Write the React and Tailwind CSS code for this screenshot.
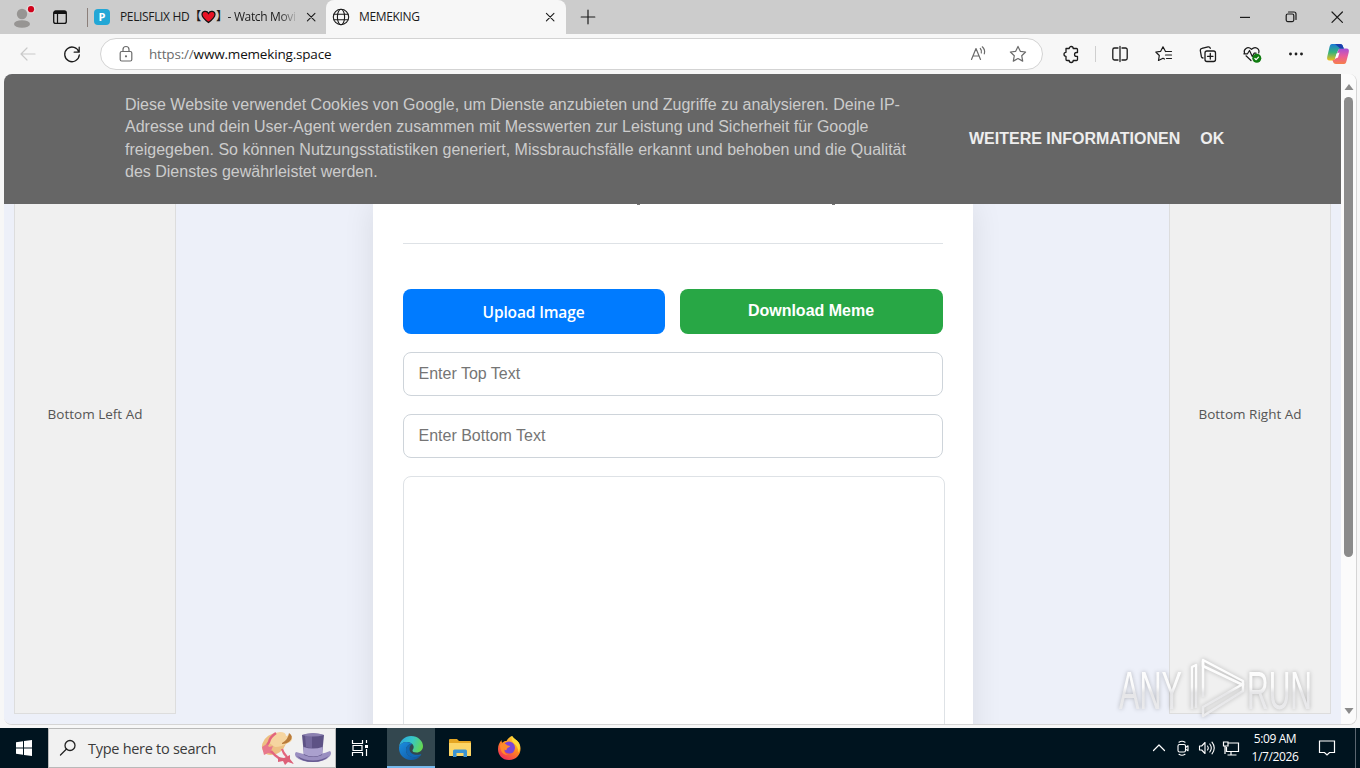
import React from 'react';

const Line = ({ className = '', size = 20, children, width = 1.2 }) => (
  <svg
    className={`shrink-0 ${className}`}
    width={size}
    height={size}
    viewBox="0 0 20 20"
    fill="none"
    stroke="currentColor"
    strokeWidth={width}
    strokeLinecap="round"
    strokeLinejoin="round"
  >
    {children}
  </svg>
);

const CloseIcon = ({ size = 20 }) => (
  <Line size={size}>
    <path d="M6 6l8.4 8.4M14.4 6L6 14.4" />
  </Line>
);

const TabStrip = () => (
  <div className="flex h-[34px] shrink-0 bg-[#cccccc] text-[#1b1b1b]">
    <svg className="ml-3 mt-1 shrink-0" width="24" height="26" viewBox="0 0 24 26">
      <circle cx="10" cy="10" r="5.2" fill="#979593" />
      <ellipse cx="10" cy="20" rx="8" ry="3.8" fill="#979593" />
      <circle cx="19" cy="5.2" r="4.4" fill="#e4dcdc" />
      <circle cx="19" cy="5.2" r="3.1" fill="#d0021b" />
    </svg>
    <svg className="ml-4 mt-[9px] shrink-0" width="16" height="16" viewBox="0 0 16 16" fill="none" stroke="#111">
      <rect x="1.7" y="2" width="12.6" height="12.4" rx="2" strokeWidth="1.3" />
      <path d="M2 3.5h12" strokeWidth="3" />
      <path d="M5.5 4v10" strokeWidth="1.2" />
    </svg>
    <div className="ml-[19px] mt-2 h-[19px] w-px shrink-0 bg-[#8b7f7a]"></div>
    <div className="flex w-[238px] shrink-0 items-center">
      <div className="ml-1.5 flex h-4 w-4 shrink-0 items-center justify-center rounded bg-[#22a7d6] font-['Open_Sans',sans-serif] text-[11px] font-bold text-white">
        P
      </div>
      <div className="ml-2.5 flex h-5 w-[178px] items-center whitespace-nowrap font-['Open_Sans','Noto_Sans_CJK_JP',sans-serif] text-[12px] tracking-[-0.35px]">
        <span>PELISFLIX HD</span>
        <span>【</span>
        <svg className="shrink-0" width="15" height="14" viewBox="0 0 15 14">
          <path
            d="M7.500 12.600C3.800 9.800 1 7.600 1 4.600C1 1 5.800 0 7.500 3.400C9.200 0 14 1 14 4.600C14 7.600 11.200 9.800 7.500 12.600Z"
            fill="#e81224"
            stroke="#111"
            strokeWidth="1.2"
          />
        </svg>
        <span>】</span>
        <span className="bg-gradient-to-r from-[#1b1b1b] from-75% to-[#bbbbbb] bg-clip-text text-transparent">
          - Watch Movi
        </span>
      </div>
      <div className="ml-1">
        <CloseIcon size={18} />
      </div>
    </div>
    <div className="flex w-[240px] shrink-0 items-center rounded-t-lg bg-[#f7f7f7]">
      <Line className="ml-[5px]" size={20} width={1.1}>
        <circle cx="10" cy="10" r="7.7" />
        <ellipse cx="10" cy="10" rx="3.6" ry="7.7" />
        <path d="M3 7.2h14M3 12.8h14" />
      </Line>
      <span className="ml-[8px] font-['Open_Sans',sans-serif] text-[12px] tracking-[-0.35px]">MEMEKING</span>
      <div className="ml-auto mr-[7px]">
        <CloseIcon size={18} />
      </div>
    </div>
    <Line className="ml-[12px] mt-[7px]" size={20}>
      <path d="M10 3.2v13.6M3.2 10h13.6" />
    </Line>
    <div className="ml-auto flex w-[138px] items-center">
      <Line className="ml-[13px]" size={20}>
        <path d="M5 10.4h10" strokeLinecap="butt" />
      </Line>
      <Line className="ml-[26px]" size={20}>
        <rect x="5.2" y="7" width="7.6" height="7.6" rx="1.5" />
        <path d="M7.5 5h5.5a2 2 0 0 1 2 2v5.4" />
      </Line>
      <Line className="ml-[26px]" size={20}>
        <path d="M5 5l10.4 10.4M15.4 5L5 15.4" />
      </Line>
    </div>
  </div>
);

const CopilotIcon = () => (
  <svg className="shrink-0" width="24" height="24" viewBox="0 0 24 24">
    <defs>
      <linearGradient id="cpA" x1="0" y1="0" x2="0" y2="1">
        <stop offset="0" stopColor="#1b7bd8" />
        <stop offset=".5" stopColor="#35b37c" />
        <stop offset="1" stopColor="#f2c019" />
      </linearGradient>
      <linearGradient id="cpB" x1="0" y1="0" x2="0" y2="1">
        <stop offset="0" stopColor="#a44fd8" />
        <stop offset=".5" stopColor="#ea5b9a" />
        <stop offset="1" stopColor="#f77f4a" />
      </linearGradient>
    </defs>
    <path d="M6 2h8c2 0 2.600 1 3.200 3l.8 2h-3c-2.500 0-3 1-3.700 3.500L9.500 16c-.6 2-1.500 2.500-3.500 2.500H3.500C1.500 18.500.6 17 1.300 14.500L3.500 5C4 3 4.500 2 6 2z" fill="url(#cpA)" />
    <path d="M18 22h-8c-2 0-2.600-1-3.200-3L6.500 18c2.500 0 3-1 3.700-3.500L12 9c.6-2 1.500-2.500 3.500-2.500h5c2 0 2.900 1.500 2.200 4L20.500 19c-.5 2-1 3-2.500 3z" fill="url(#cpB)" />
    <path d="M9 2h5c2 0 2.600 1 3.200 3l.6 1.600h-3.600z" fill="#1b3fae" />
    <path d="M10.500 11.500l3-1-1.500 5-3 1.200z" fill="#fff" />
  </svg>
);

const Toolbar = () => (
  <div className="flex h-10 shrink-0 items-center bg-[#f7f7f7] text-[#1b1b1b]">
    <Line className="ml-[18px] text-[#c9c9c9]" size={20}>
      <path d="M17 10H3M9 4l-6 6 6 6" />
    </Line>
    <Line className="ml-6" size={20} width={1.3}>
      <path d="M17 8.200A7.300 7.300 0 1 0 17.300 11M17.200 3.200v5h-5" />
    </Line>
    <div className="ml-[18px] flex h-8 w-[943px] items-center rounded-full border border-[#d3d3d3] bg-white text-[#6b6b6b]">
      <Line className="ml-[15px]" size={20}>
        <rect x="4.200" y="7.500" width="11.600" height="9.500" rx="1.500" />
        <path d="M7 7.500V5.500a3 3 0 0 1 6 0v2" />
        <circle cx="10" cy="12.300" r=".5" fill="currentColor" />
      </Line>
      <span className="ml-[13px] font-['Open_Sans',sans-serif] text-[13.5px] tracking-[-0.18px]">
        https://<span className="text-[#111]">www.memeking.space</span>
      </span>
      <Line className="ml-auto" size={20}>
        <path d="M3.500 15.500L8 4.500 12.500 15.500M5 12h6" />
        <path d="M12.300 4.500q1.700 1.800 1 4.500M14.300 2.800q3.200 3 2 7" />
      </Line>
      <Line className="ml-5 mr-[14px]" size={20}>
        <path d="M10 2.400l2.300 4.900 5.300.7-3.900 3.700 1 5.400-4.700-2.600-4.700 2.600 1-5.400L2.400 8l5.300-.7z" />
      </Line>
    </div>
    <Line className="ml-[18px]" size={20} width={1.3}>
      <path d="M5 4.500h3.200a2 2 0 0 1 4 0h3.300a1 1 0 0 1 1 1v3h-1a1.900 1.900 0 0 0 0 3.900h1v3.100a1 1 0 0 1-1 1h-3.300a2 2 0 0 1-4 0H6a1 1 0 0 1-1-1v-3.200a2 2 0 0 1 0-4z" />
    </Line>
    <div className="ml-[14px] h-4 w-px bg-[#cfcfcf]"></div>
    <Line className="ml-[14px]" size={20} width={1.3}>
      <path d="M8 4H4.500A1.700 1.700 0 0 0 2.800 5.700v8.600A1.700 1.700 0 0 0 4.500 16H8M12 4h3.500a1.700 1.700 0 0 1 1.700 1.700v8.600a1.700 1.700 0 0 1-1.700 1.700H12M10 2.500v15" />
    </Line>
    <Line className="ml-6" size={20} width={1.2}>
      <path d="M11.500 7.500L9 2.800 6.700 7.300l-4.900.7 3.500 3.500-.8 5 4.500-2.300 1.500.8M11.500 7.500h6M11.500 11h6M12.500 14.500H17.500" />
    </Line>
    <Line className="ml-6" size={20} width={1.3}>
      <rect x="7" y="7" width="10.500" height="10.500" rx="2" />
      <path d="M12.300 9.500v5.500M9.500 12.300h5.500M5 14a2 2 0 0 1-1.600-1.300L2.300 6.500a2 2 0 0 1 1.600-2.200L10 2.900a2 2 0 0 1 2.300 1.400" />
    </Line>
    <Line className="ml-6" size={20} width={1.2}>
      <path d="M2.500 9C1.200 5.500 5.500 1.500 9.500 5.300 13.500 1.500 18 5 16.700 9M4 11.800L9 16.500M1.800 9.800h3.700l2-3.300 2.800 6 1.800-3.300h2" />
      <circle cx="14.800" cy="14.300" r="4.500" fill="#107c10" stroke="none" />
      <path d="M12.900 14.500l1.300 1.200 2.300-2.500" stroke="#fff" />
    </Line>
    <Line className="ml-6" size={20}>
      <circle cx="4.500" cy="10" r=".8" fill="currentColor" />
      <circle cx="10" cy="10" r=".8" fill="currentColor" />
      <circle cx="15.500" cy="10" r=".8" fill="currentColor" />
    </Line>
    <div className="ml-5">
      <CopilotIcon />
    </div>
  </div>
);

const CookieBanner = () => (
  <div className="relative z-10 flex h-[130px] shrink-0 items-center bg-[#666666] font-['Liberation_Sans',sans-serif] text-base">
    <p className="-mt-px ml-[121px] w-[800px] whitespace-nowrap leading-[22.4px] text-[#cccccc]">
      Diese Website verwendet Cookies von Google, um Dienste anzubieten und Zugriffe zu analysieren. Deine IP-
      <br />
      Adresse und dein User-Agent werden zusammen mit Messwerten zur Leistung und Sicherheit für Google
      <br />
      freigegeben. So können Nutzungsstatistiken generiert, Missbrauchsfälle erkannt und behoben und die Qualität
      <br />
      des Dienstes gewährleistet werden.
    </p>
    <div className="ml-11 flex gap-5 whitespace-nowrap font-bold text-[#eeeeee]">
      <button>WEITERE INFORMATIONEN</button>
      <button>OK</button>
    </div>
  </div>
);

const SideAd = ({ label }) => (
  <aside className="flex h-[510px] w-[162px] shrink-0 justify-center border border-t-0 border-[#dddddd] bg-[#f0f0f0] pt-[200px] font-['Open_Sans',sans-serif] text-[13.5px] leading-5 text-[#555555]">
    {label}
  </aside>
);

const MemeCard = () => (
  <main className="h-[560px] w-[600px] shrink-0 bg-white px-[30px] shadow-[0_0_30px_rgba(0,0,0,0.09)]">
    <div className="flex h-px">
      <div className="ml-[234px] h-px w-[3px] bg-[#777]"></div>
      <div className="ml-[192px] h-px w-[3px] bg-[#777]"></div>
    </div>
    <hr className="mt-[38px] border-[#dee2e6]" />
    <div className="mt-[45px] flex h-[45px] gap-[15px]">
      <button className="w-[262px] rounded-lg bg-[#007bff] pt-0.5 font-['Open_Sans',sans-serif] text-[15.5px] font-semibold tracking-[-0.15px] text-white">
        Upload Image
      </button>
      <button className="flex-1 rounded-lg bg-[#28a745] pb-0.5 font-['Liberation_Sans',sans-serif] text-base font-bold text-white">
        Download Meme
      </button>
    </div>
    <input
      className="mt-[18px] block h-11 w-full rounded-lg border border-[#ced4da] px-[15px] font-['Liberation_Sans',sans-serif] text-base placeholder:text-[#757575]"
      placeholder="Enter Top Text"
    />
    <input
      className="mt-[18px] block h-11 w-full rounded-lg border border-[#ced4da] px-[15px] font-['Liberation_Sans',sans-serif] text-base placeholder:text-[#757575]"
      placeholder="Enter Bottom Text"
    />
    <div className="mt-[18px] h-[400px] w-[542px] rounded-lg border border-[#dee2e6]"></div>
  </main>
);

const Scrollbar = () => (
  <div className="flex w-[15px] shrink-0 flex-col items-center bg-[#fbfbfb]">
    <svg className="mt-[9px] shrink-0" width="10" height="8" viewBox="0 0 10 8">
      <path d="M5 1l4.500 6h-9z" fill="#8b8b8b" />
    </svg>
    <div className="mt-[6px] h-[460px] w-[9px] shrink-0 rounded-full bg-[#8b8b8b]"></div>
    <svg className="mb-[9px] mt-auto shrink-0" width="10" height="8" viewBox="0 0 10 8">
      <path d="M5 7l4.500-6h-9z" fill="#8b8b8b" />
    </svg>
  </div>
);

const Watermark = () => (
  <svg
    className="absolute left-[1112px] top-[648px] drop-shadow-[0_0_2px_rgba(0,0,0,0.25)]"
    width="240"
    height="76"
    viewBox="0 0 240 76"
    fill="none"
    stroke="url(#wm)"
    strokeLinejoin="round"
  >
    <defs>
      <linearGradient id="wm" gradientUnits="userSpaceOnUse" x1="0" y1="10" x2="0" y2="68">
        <stop offset="0" stopColor="#ffffff" />
        <stop offset=".5" stopColor="#fafafa" />
        <stop offset=".6" stopColor="#e6e6e8" />
        <stop offset="1" stopColor="#ececee" />
      </linearGradient>
    </defs>
    <g fill="url(#wm)" stroke="none" fontFamily="Liberation Sans, sans-serif" fontSize="53">
      <text x="7" y="61" textLength="63" lengthAdjust="spacingAndGlyphs">ANY</text>
      <text x="135" y="61" textLength="65" lengthAdjust="spacingAndGlyphs">RUN</text>
    </g>
    <path d="M80 61V19l4-2v43M91 13v36M91 68l40-25V36L91 59z" strokeWidth="2.500" />
    <path d="M91 12l40 21v4L91 18z" strokeWidth="2.500" />
  </svg>
);

const HatArt = () => (
  <svg className="shrink-0" width="72" height="36" viewBox="0 0 72 36">
    <ellipse cx="14" cy="14" rx="13" ry="10" transform="rotate(-35 14 14)" fill="#edc083" />
    <path d="M8 12Q12 2 20 2q6 0 6 4 5-2 6 1 1 4-4 6-6 4-13 4z" fill="#f6d5a0" />
    <path d="M22 13q6-3 7-10q5 3 1 8-3 3-8 3z" fill="#b97c3b" />
    <path d="M16 3q-6 4-7 9-2 4-5 6" stroke="#e3657d" strokeWidth="2.500" fill="none" />
    <path d="M2 17l5-3 2 3 4-1-2 5 1 3-4-1-4 2z" fill="#e8798c" />
    <path d="M11 21q3 4 9 8M22 19q1 4 5 8" stroke="#e3657d" strokeWidth="2.200" fill="none" />
    <path d="M18 27l6 1 6-3v4l4 5-6-2-3 3-2-4-5 1z" fill="#dd6078" />
    <path d="M36 22q17 6 34-1 2 2 0 5-5 6-17 6-12 0-17-5-2-3 0-5z" fill="#9a8fc1" />
    <path d="M42 5q11-3 22 0l-2 20q-9 4-18 0z" fill="#5d5285" />
    <path d="M45 5l1 12q3 1 6 1V4z" fill="#73689c" />
    <path d="M43.500 17q9.500 3 19 0v7q-9 5-19 0z" fill="#aaa0ce" />
    <path d="M42 5q11-4 22 0-11 3-22 0z" fill="#8b80b0" />
    <path d="M37 26q16 9 32 0-6 6-16 6-11 0-16-6z" fill="#665a90" />
  </svg>
);

const EdgeIcon = () => (
  <svg width="26" height="26" viewBox="0 0 26 26">
    <defs>
      <linearGradient id="edgeTop" x1="0" y1="0.300" x2="1" y2="0.600">
        <stop offset="0" stopColor="#2ba7df" />
        <stop offset=".5" stopColor="#37c7c6" />
        <stop offset="1" stopColor="#66d84d" />
      </linearGradient>
      <linearGradient id="edgeLow" x1="0" y1="0" x2="1" y2="1">
        <stop offset="0" stopColor="#1a8ee0" />
        <stop offset="1" stopColor="#10529c" />
      </linearGradient>
    </defs>
    <path d="M1 12C2 5 7 1 13 1c7 0 12 5 12 10 0 4-3 6.500-6.500 6.500-3 0-4-1-4-2 0-1 1.200-1.500 1.200-3.500C15.700 9 12 7 8.500 7 5 7 2 9 1 12z" fill="url(#edgeTop)" />
    <path d="M1 12c1-3 4-5 7.500-5 2.500 0 4.500.8 5.800 2C10 9 8 12 8 15c0 6 7 9.500 14.500 5.500C20.500 23.500 17 25 13 25 6 25 .5 19.500 1 12z" fill="url(#edgeLow)" />
    <path d="M14.300 9C10 9 8 12 8 15c0 6 7 9.500 14.500 5.500 1-.6 1-1.600 0-1.300-5 1.800-11-.4-11-5.200 0-2.500 1-4 2.800-5z" fill="#1268b4" />
  </svg>
);

const FolderIcon = () => (
  <svg width="22" height="20" viewBox="0 0 22 20">
    <path d="M0 2q0-1 1-1h7l2 2h11q1 0 1 1v14H0z" fill="#e5a623" />
    <path d="M0 5h22v12q0 1-1 1H1q-1 0-1-1z" fill="#fcd667" />
    <path d="M4 19v-6q0-1.500 1.500-1.500h11Q18 11.500 18 13v6h-3.500v-4h-7v4z" fill="#3c94d2" />
  </svg>
);

const FirefoxIcon = () => (
  <svg width="24" height="24" viewBox="0 0 24 24">
    <defs>
      <linearGradient id="fox" x1="0.800" y1="0" x2="0.200" y2="1">
        <stop offset="0" stopColor="#ffe13c" />
        <stop offset=".45" stopColor="#ff8a1e" />
        <stop offset="1" stopColor="#f0265f" />
      </linearGradient>
    </defs>
    <path d="M15 0c2 3 5 4 7 7 4 7 0 17-10 17C5 24 1 19 1 13c0-4 1.500-6.500 3.500-9 0 1.500.3 2 .7 2.800C7 5 8 4.800 9.500 5c2-3 3-4 5.500-5z" fill="url(#fox)" />
    <path d="M8 7q4-3 8 0 3 3 1.500 7T12 17.500Q7 17 7 12z" fill="#7b45d6" />
    <path d="M3 9c2-2.500 5-2 7 .2l3 .8c0 1.500-3 1.500-3.300 3.200 0 1.500-1.500 1.300-2.200.3-1 3 1.500 5 4.500 5-4 1.500-9-1.500-9-9.500z" fill="#ff8a2a" />
    <path d="M15 0c2 3 5 4 7 7 1.500 3.500 1 7-.5 9.500 0-4-2-7.500-5-9.500-1.500-2-2.200-4-1.500-7z" fill="#ffd93a" />
  </svg>
);

const Taskbar = () => (
  <div className="flex h-10 shrink-0 items-center bg-[#00141f] font-['Open_Sans',sans-serif] text-white">
    <div className="flex w-12 justify-center">
      <svg width="16" height="16" viewBox="0 0 16 16" fill="#fff">
        <path d="M0 2.200L7 1.200v6.300H0zM8 1l8-1v7.500H8zM0 8.500h7v6.300l-7-1zM8 8.500h8V16l-8-1.100z" />
      </svg>
    </div>
    <div className="flex h-10 w-[288px] items-center border border-[#b9b9b9] bg-[#f1f1f1]">
      <Line className="ml-[9px] text-[#222]" size={20} width={1.3}>
        <circle cx="12" cy="7.500" r="5" />
        <path d="M8.500 11L2.500 17" />
      </Line>
      <span className="ml-[10px] mt-0.5 whitespace-nowrap text-[14.5px] tracking-[-0.28px] text-[#3b3b3b]">
        Type here to search
      </span>
      <div className="ml-auto mr-[3px]">
        <HatArt />
      </div>
    </div>
    <div className="flex w-[51px] justify-center pr-[3px]">
      <svg width="18" height="18" viewBox="0 0 18 18" fill="none" stroke="#fff" strokeWidth="1.200">
        <path d="M1.500 1v3.500h10V1M1.500 17v-3.500h10V17M2 6.500h9v5H2zM15.500 1v3M15.500 10v7" />
        <path d="M14 6h3v3h-3z" fill="#fff" stroke="none" />
      </svg>
    </div>
    <div className="flex h-10 w-12 items-center justify-center border-b-2 border-[#76b9ed] bg-[#33474f] pt-0.5">
      <EdgeIcon />
    </div>
    <div className="flex w-[49px] justify-center">
      <FolderIcon />
    </div>
    <div className="flex w-[49px] justify-center">
      <FirefoxIcon />
    </div>
    <div className="ml-auto flex h-10 items-center">
      <Line size={20}>
        <path d="M4.500 12.500L10 7l5.500 5.500" />
      </Line>
      <Line className="ml-[4px]" size={20} width={1.1}>
        <rect x="5" y="6.500" width="7.500" height="7.500" rx="1.500" />
        <path d="M12.500 9.500L15 7.800v5l-2.500-1.700M6 4.200q3-2 6 0M6 16.300q3 2 6 0" />
      </Line>
      <Line className="ml-[4px]" size={20} width={1.1}>
        <path d="M2.500 8h2.200L8 4.500v11L4.700 12H2.500zM10.500 8q1.500 2 0 4M12.800 6q3 4 0 8M15 4.200q4.500 5.800 0 11.600" />
      </Line>
      <svg className="ml-1" width="20" height="20" viewBox="0 0 20 20" fill="none" stroke="#fff" strokeWidth="1.200">
        <path d="M7 5h10.500v8.500H5.500V9M10 13.500V17M6.500 17h9M2.500 4h4.500v4H2.500zM4 8v8" />
      </svg>
      <div className="ml-[4px] flex w-[60px] flex-col items-center whitespace-nowrap text-[12px] leading-[18px] tracking-[-0.4px]">
        <span>5:09 AM</span>
        <span>1/7/2026</span>
      </div>
      <svg className="ml-[13px]" width="18" height="18" viewBox="0 0 18 18" fill="none" stroke="#fff" strokeWidth="1.200">
        <path d="M1.500 2h15v11.500h-5L9 16l-2.500-2.500h-5z" />
      </svg>
      <div className="ml-[19px] mr-1 h-10 w-px bg-[#5b6670]"></div>
    </div>
  </div>
);

const App = () => {
  return (
    <div className="relative flex h-[768px] w-[1360px] flex-col overflow-hidden bg-[#f7f7f7]">
      <TabStrip />
      <Toolbar />
      <div className="ml-1 flex h-[651px] w-[1353px] shrink-0 overflow-hidden rounded-lg border-b border-r border-[#d5d5d5]">
        <div className="flex w-[1337px] shrink-0 flex-col bg-[#edf0f9]">
          <CookieBanner />
          <div className="flex justify-between px-2.5">
            <SideAd label="Bottom Left Ad" />
            <MemeCard />
            <SideAd label="Bottom Right Ad" />
          </div>
        </div>
        <Scrollbar />
      </div>
      <div className="h-[3px] shrink-0"></div>
      <Taskbar />
      <Watermark />
    </div>
  );
};

export default App;
